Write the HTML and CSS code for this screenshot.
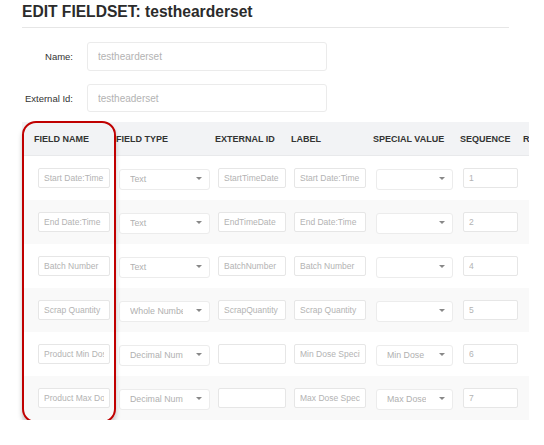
FILE: index.html
```html
<!DOCTYPE html>
<html lang="en">
<head>
  <meta charset="UTF-8" />
  <title>Edit Fieldset</title>
  <link rel="stylesheet" href="styles.css">
</head>
<body>
  <div class="page">
    <h1>EDIT FIELDSET: testhearderset</h1>

    <div class="form-row">
      <label>Name:</label>
      <input type="text" placeholder="testhearderset" />
    </div>
    <div class="form-row">
      <label>External Id:</label>
      <input type="text" placeholder="testheaderset" />
    </div>

    <div class="fields">
      <div class="fields-scroll">
        <div class="row head">
          <div>FIELD NAME</div>
          <div>FIELD TYPE</div>
          <div>EXTERNAL ID</div>
          <div>LABEL</div>
          <div>SPECIAL VALUE</div>
          <div>SEQUENCE</div>
          <div class="cut">R</div>
        </div>

        <div class="row">
          <div><input class="w-name" placeholder="Start Date:Time" /></div>
          <div><span class="select w-type"><select><option>Text</option></select></span></div>
          <div><input class="w-ext" placeholder="StartTimeDate" /></div>
          <div><input class="w-label" placeholder="Start Date:Time" /></div>
          <div><span class="select w-special"><select><option></option></select></span></div>
          <div><input class="w-seq" placeholder="1" /></div>
          <div></div>
        </div>

        <div class="row">
          <div><input class="w-name" placeholder="End Date:Time" /></div>
          <div><span class="select w-type"><select><option>Text</option></select></span></div>
          <div><input class="w-ext" placeholder="EndTimeDate" /></div>
          <div><input class="w-label" placeholder="End Date:Time" /></div>
          <div><span class="select w-special"><select><option></option></select></span></div>
          <div><input class="w-seq" placeholder="2" /></div>
          <div></div>
        </div>

        <div class="row">
          <div><input class="w-name" placeholder="Batch Number" /></div>
          <div><span class="select w-type"><select><option>Text</option></select></span></div>
          <div><input class="w-ext" placeholder="BatchNumber" /></div>
          <div><input class="w-label" placeholder="Batch Number" /></div>
          <div><span class="select w-special"><select><option></option></select></span></div>
          <div><input class="w-seq" placeholder="4" /></div>
          <div></div>
        </div>

        <div class="row">
          <div><input class="w-name" placeholder="Scrap Quantity" /></div>
          <div><span class="select w-type"><select><option>Whole Number</option></select></span></div>
          <div><input class="w-ext" placeholder="ScrapQuantity" /></div>
          <div><input class="w-label" placeholder="Scrap Quantity" /></div>
          <div><span class="select w-special"><select><option></option></select></span></div>
          <div><input class="w-seq" placeholder="5" /></div>
          <div></div>
        </div>

        <div class="row">
          <div><input class="w-name" placeholder="Product Min Dose" /></div>
          <div><span class="select w-type"><select><option>Decimal Number</option></select></span></div>
          <div><input class="w-ext" placeholder="" /></div>
          <div><input class="w-label" placeholder="Min Dose Specification" /></div>
          <div><span class="select w-special"><select><option>Min Dose</option></select></span></div>
          <div><input class="w-seq" placeholder="6" /></div>
          <div></div>
        </div>

        <div class="row">
          <div><input class="w-name" placeholder="Product Max Dose" /></div>
          <div><span class="select w-type"><select><option>Decimal Number</option></select></span></div>
          <div><input class="w-ext" placeholder="" /></div>
          <div><input class="w-label" placeholder="Max Dose Specification" /></div>
          <div><span class="select w-special"><select><option>Max Dose</option></select></span></div>
          <div><input class="w-seq" placeholder="7" /></div>
          <div></div>
        </div>
      </div>

      <!-- destaque da coluna -->
      <div class="highlight"></div>
    </div>
  </div>
</body>
</html>
```

FILE: styles.css
```css
* { margin: 0; padding: 0; box-sizing: border-box; }
body { font-family: "Liberation Sans", Arial, sans-serif; background: #fff; color: #333; }

.page {
  padding: 2px 0 0 22px;
}

h1 {
  width: 487px;
  font-size: 15.6px;
  line-height: 20px;
  font-weight: bold;
  color: #2b2b2b;
  padding-bottom: 5px;
  border-bottom: 1px solid #e6e6e6;
  margin-bottom: 14px;
}

.form-row {
  display: flex;
  align-items: center;
  margin-bottom: 13px;
}
.form-row label {
  width: 51px;
  margin-right: 14px;
  text-align: right;
  font-size: 9.5px;
  color: #333;
}
.form-row input {
  width: 240px;
  height: 29px;
  padding: 0 10px;
  border: 1px solid #ebebeb;
  border-radius: 3px;
  font-family: inherit;
  font-size: 10px;
  outline: none;
}
.form-row + .form-row { margin-bottom: 10px; }
.form-row + .form-row input { height: 28px; }

input::placeholder { color: #b3b3b3; }

.fields {
  position: relative;
}
.fields-scroll {
  width: 507px;
  overflow: hidden;
}

.row {
  display: grid;
  grid-template-columns: 91px 99px 76px 82px 87px 63px 80px;
  width: 578px;
  height: 44px;
  align-items: center;
}
.row:nth-child(odd) { background: #f9f9f9; }
.row > div { padding-left: 6px; }
.row > div:first-child { padding-left: 16px; }

.row.head {
  height: 34px;
  background: #f2f3f5;
  border-bottom: 1px solid #e8e9eb;
  font-size: 9px;
  font-weight: bold;
  color: #333;
  white-space: nowrap;
}
.row.head > div { padding-left: 3px; }
.row.head > div:first-child { padding-left: 12px; }

.row input {
  height: 20px;
  padding: 0 5px;
  border: 1px solid #e6e6e6;
  border-radius: 2px;
  background: #fff;
  font-family: inherit;
  font-size: 8.5px;
  outline: none;
  display: block;
}

.w-name { width: 72px; }
.w-ext { width: 68px; }
.w-label { width: 72px; }
.w-seq { width: 55px; }
.w-type { width: 91px; }
.w-special { width: 77px; }

.select {
  position: relative;
  display: block;
  height: 21px;
}
.select select {
  appearance: none;
  -webkit-appearance: none;
  width: 100%;
  height: 100%;
  padding: 0 26px 2px 10px;
  border: 1px solid #ececec;
  border-radius: 3px;
  background: #fff;
  font-family: inherit;
  font-size: 8.8px;
  color: #b0b0b0;
  outline: none;
}
.select::after {
  content: "";
  position: absolute;
  right: 8px;
  top: 9px;
  border-left: 3px solid transparent;
  border-right: 3px solid transparent;
  border-top: 3px solid #888;
}

.highlight {
  position: absolute;
  left: 0;
  top: -1px;
  width: 94px;
  height: 302px;
  border: 2px solid #c00000;
  border-radius: 14px;
  box-shadow: 0 4px 5px rgba(0,0,0,0.22);
  pointer-events: none;
}
```
